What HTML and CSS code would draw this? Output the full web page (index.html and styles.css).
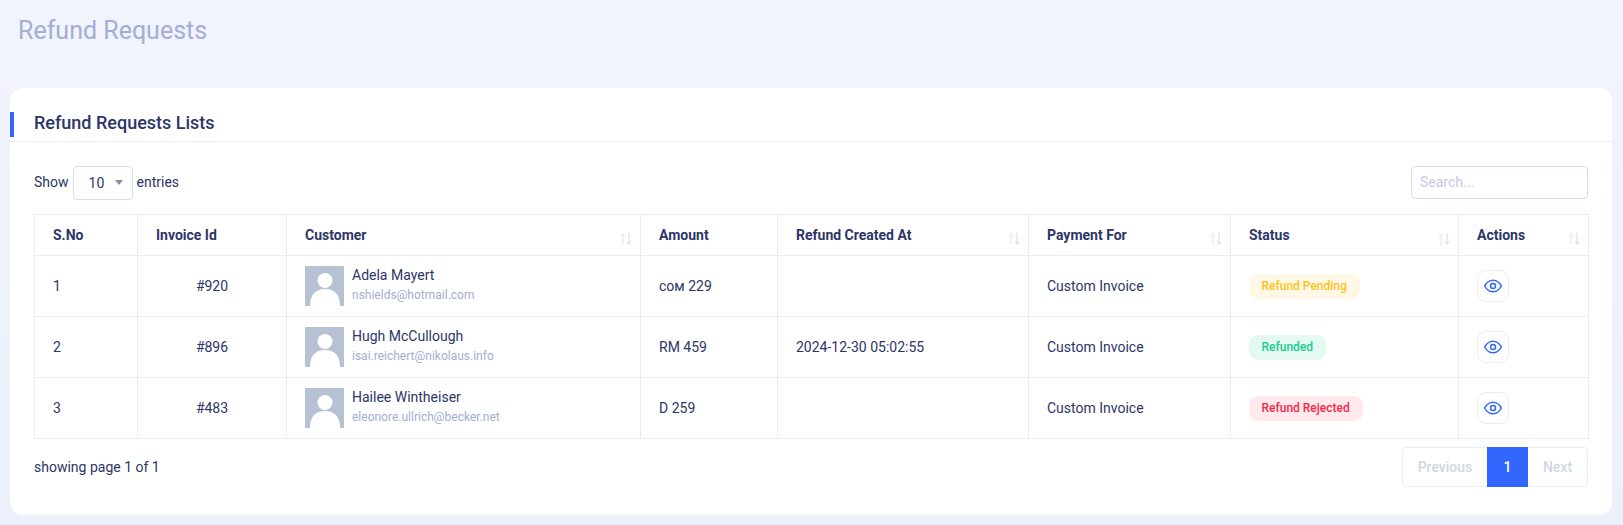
FILE: index.html
```html
<!DOCTYPE html>
<html lang="en">
<head>
<meta charset="utf-8">
<title>Refund Requests</title>
<link rel="stylesheet" href="styles.css">
</head>
<body>
<header class="page-header"><h1>Refund Requests</h1></header>
<main class="card">
  <div class="card-head"><h2>Refund Requests Lists</h2></div>
  <div class="card-body">
    <div class="controls">
      <div class="length">Show <span class="select">10<i class="caret"></i></span> entries</div>
      <div class="search">Search...</div>
    </div>
    <table>
      <colgroup>
        <col class="c1"><col class="c2"><col class="c3"><col class="c4"><col class="c5"><col class="c6"><col class="c7"><col class="c8">
      </colgroup>
      <thead>
        <tr>
          <th>S.No</th>
          <th>Invoice Id</th>
          <th class="sort">Customer<span class="arrows"><svg viewBox="0 0 14 14"><path d="M4 13V2M1.5 4.5 4 2l2.500 2.500"/><path class="dark" d="M10 1v11M7.500 9.500 10 12l2.500-2.500"/></svg></span></th>
          <th>Amount</th>
          <th class="sort">Refund Created At<span class="arrows"><svg viewBox="0 0 14 14"><path d="M4 13V2M1.5 4.5 4 2l2.500 2.500"/><path class="dark" d="M10 1v11M7.500 9.500 10 12l2.500-2.500"/></svg></span></th>
          <th class="sort">Payment For<span class="arrows"><svg viewBox="0 0 14 14"><path d="M4 13V2M1.5 4.5 4 2l2.500 2.500"/><path class="dark" d="M10 1v11M7.500 9.500 10 12l2.500-2.500"/></svg></span></th>
          <th class="sort">Status<span class="arrows"><svg viewBox="0 0 14 14"><path d="M4 13V2M1.5 4.5 4 2l2.500 2.500"/><path class="dark" d="M10 1v11M7.500 9.500 10 12l2.500-2.500"/></svg></span></th>
          <th class="sort">Actions<span class="arrows"><svg viewBox="0 0 14 14"><path d="M4 13V2M1.5 4.5 4 2l2.500 2.500"/><path class="dark" d="M10 1v11M7.500 9.500 10 12l2.500-2.500"/></svg></span></th>
        </tr>
      </thead>
      <tbody>
        <tr>
          <td>1</td><td class="center">#920</td>
          <td><div class="customer"><svg class="avatar" viewBox="0 0 39 40"><rect width="39" height="40" fill="#b6c2d3"/><circle cx="20" cy="14.500" r="7.500" fill="#fff"/><path d="M5 40c0-12 6-17 15-17s15 5 15 17z" fill="#fff"/></svg><div><div class="name">Adela Mayert</div><div class="email">nshields@hotmail.com</div></div></div></td>
          <td>сом 229</td><td></td><td>Custom Invoice</td>
          <td><span class="badge pending">Refund Pending</span></td>
          <td><span class="view"><svg viewBox="0 0 24 24"><path d="M2 12s3.600-7 10-7 10 7 10 7-3.600 7-10 7-10-7-10-7z"/><circle cx="12" cy="12" r="3"/></svg></span></td>
        </tr>
        <tr>
          <td>2</td><td class="center">#896</td>
          <td><div class="customer"><svg class="avatar" viewBox="0 0 39 40"><rect width="39" height="40" fill="#b6c2d3"/><circle cx="20" cy="14.500" r="7.500" fill="#fff"/><path d="M5 40c0-12 6-17 15-17s15 5 15 17z" fill="#fff"/></svg><div><div class="name">Hugh McCullough</div><div class="email">isai.reichert@nikolaus.info</div></div></div></td>
          <td>RM 459</td><td>2024-12-30 05:02:55</td><td>Custom Invoice</td>
          <td><span class="badge refunded">Refunded</span></td>
          <td><span class="view"><svg viewBox="0 0 24 24"><path d="M2 12s3.600-7 10-7 10 7 10 7-3.600 7-10 7-10-7-10-7z"/><circle cx="12" cy="12" r="3"/></svg></span></td>
        </tr>
        <tr>
          <td>3</td><td class="center">#483</td>
          <td><div class="customer"><svg class="avatar" viewBox="0 0 39 40"><rect width="39" height="40" fill="#b6c2d3"/><circle cx="20" cy="14.500" r="7.500" fill="#fff"/><path d="M5 40c0-12 6-17 15-17s15 5 15 17z" fill="#fff"/></svg><div><div class="name">Hailee Wintheiser</div><div class="email">eleonore.ullrich@becker.net</div></div></div></td>
          <td>D 259</td><td></td><td>Custom Invoice</td>
          <td><span class="badge rejected">Refund Rejected</span></td>
          <td><span class="view"><svg viewBox="0 0 24 24"><path d="M2 12s3.600-7 10-7 10 7 10 7-3.600 7-10 7-10-7-10-7z"/><circle cx="12" cy="12" r="3"/></svg></span></td>
        </tr>
      </tbody>
    </table>
    <div class="footer">
      <div class="info">showing page 1 of 1</div>
      <div class="pager"><span class="pg prev">Previous</span><span class="pg cur">1</span><span class="pg next">Next</span></div>
    </div>
  </div>
</main>
</body>
</html>
```
FILE: styles.css
```css
* { box-sizing: border-box; }
html, body { margin: 0; height: 525px; overflow: hidden; }
body { background: linear-gradient(#f1f4fd, #ecf0fa); font-family: Roboto, "Liberation Sans", sans-serif; font-size: 14px; color: #2c3667; }
.page-header { height: 88px; padding: 14px 18px 0; }
h1 { margin: 0; font-size: 25px; line-height: 34px; font-weight: 400; color: #a3aed1; }
.card { margin: 0 11px 0 10px; height: 427px; background: #fff; border-radius: 13px; }
.card-head { height: 54px; padding: 22px 24px 0; border-bottom: 1px solid #e9edf4; position: relative; }
.card-head::before { content: ""; position: absolute; left: 0; top: 24px; width: 4px; height: 25px; background: #3366ff; }
h2 { margin: 0; font-size: 18px; line-height: 25px; font-weight: 500; color: #2c3667; }
.card-body { padding: 24px 24px 0; }
.controls { display: flex; justify-content: space-between; align-items: center; height: 33px; margin-bottom: 15px; }
.length { display: flex; align-items: center; gap: 4px; margin-top: -1px; }
.select { width: 60px; height: 34px; margin-top: 1px; border: 1px solid #d3dfea; border-radius: 4px; display: flex; align-items: center; padding-left: 15px; font-size: 14px; gap: 10px; }
.caret { width: 0; height: 0; border: 4px solid transparent; border-top: 5px solid #8a8fa5; border-bottom: 0; margin-left: 1px; }
.search { width: 177px; height: 33px; border: 1px solid #d3dfea; border-radius: 4px; padding: 0 8px; line-height: 30px; color: #c5c9e6; }
table { width: 100%; border-collapse: collapse; table-layout: fixed; border: 1px solid #e9edf4; }
th, td { border: 1px solid #e9edf4; padding: 0 18px; text-align: left; }
th { height: 41px; font-weight: 700; font-size: 14px; position: relative; }
td { height: 61px; }
.c1 { width: 103px; } .c2 { width: 149px; } .c3 { width: 354px; } .c4 { width: 137px; }
.c5 { width: 251px; } .c6 { width: 202px; } .c7 { width: 228px; } .c8 { width: 130px; }
.center { text-align: center; padding-right: 24px; padding-left: 24px; }
.arrows { position: absolute; right: 7px; top: 17px; width: 14px; height: 14px; }
.arrows svg { display: block; width: 14px; height: 14px; fill: none; stroke: #dfe4ef; stroke-width: 1; }
.arrows .dark { stroke: #d3d8e4; }
.customer { display: flex; align-items: center; gap: 8px; }
.avatar { width: 39px; height: 40px; flex: none; }
.name { font-size: 14px; line-height: 20px; margin-top: -3px; }
.email { font-size: 12px; line-height: 18px; color: #a3aed1; margin-top: 1px; }
.badge { display: inline-block; height: 25px; line-height: 25px; padding: 0 13px 0 12.500px; border-radius: 9px; font-size: 12px; font-weight: 500; }
.pending { background: #fff8e7; color: #ffc21a; }
.refunded { background: #e3f9f1; color: #1bcb8f; }
.rejected { background: #ffe9ec; color: #f7284a; }
.view { display: inline-flex; align-items: center; justify-content: center; width: 32px; height: 32px; border: 1px solid #e9edf6; border-radius: 9px; vertical-align: middle; }
.view svg { width: 20px; height: 20px; fill: none; stroke: #3366ff; stroke-width: 1.800; }
.footer { display: flex; justify-content: space-between; align-items: center; margin-top: 8px; height: 40px; }
.pager { display: flex; height: 40px; border: 1px solid #e9edf6; border-radius: 4px; width: 186px; }
.pg { display: flex; align-items: center; justify-content: center; font-weight: 500; color: #d0d6e2; }
.prev { width: 84px; } .cur { width: 41px; background: #3366ff; color: #fff; margin: -1px 0; } .next { flex: 1; }
```
